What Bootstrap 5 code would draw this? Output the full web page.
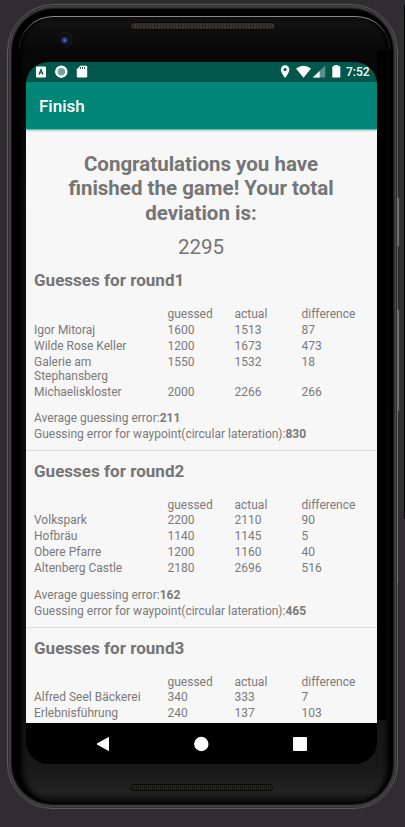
<!DOCTYPE html>
<html lang="en">
<head>
<meta charset="utf-8">
<meta name="viewport" content="width=device-width, initial-scale=1">
<title>Finish</title>
<link href="https://cdn.jsdelivr.net/npm/bootstrap@5.3.0/dist/css/bootstrap.min.css" rel="stylesheet">
<style>
body{width:405px;height:827px;background:#302d30;font-family:Roboto,sans-serif;font-size:12px;line-height:14px;color:#7a7a7a}
.desk{width:405px;height:827px;padding:4px 0 0 7px}
.desk-edge{right:0;top:5px;width:1px;height:514px;background:#000}
.phone{width:391px;height:805px;border:1px solid #5c5c5c;border-radius:47px 47px 45px 45px;background:#000;box-shadow:inset 0 0 0 1px #2c2c2c,inset 0 0 0 2px #484848,inset 0 0 0 3px #333,inset 0 0 0 4px #1c1c1c;padding:11px 7px 5px 11px}
.glass{width:371px;height:787px;border-radius:34px 34px 36px 36px;background:linear-gradient(#141414 0,#070707 34px,#080808 50px,#111 180px,#151515 700px,#181818 750px,#222 775px,#0b0b0b 787px);border-top:1px solid #8a8a8a;box-shadow:inset 5px 0 5px -2px #000,inset -5px 0 5px -2px #000}
.glass-side{right:16px;top:50px;width:12px;height:670px;background:linear-gradient(90deg,#000 75%,#080808)}
.rocker{right:5px;width:3px;background:#6b676b;border:1px solid #3a373a;border-left-color:#777377;border-radius:1px}
.rocker-a{top:197px;height:50px}.rocker-b{top:309px;height:103px}
.rim-light{left:397px;top:412px;width:1px;height:171px;background:#737073}
.lens{left:58px;top:32px;width:15px;height:15px;border-radius:50%;background:radial-gradient(circle at 45% 55%,#7184d8 0,#29376f 16%,#0b0e1d 38%,#08080a 50%,#1b1b1c 57%,#131313 72%)}
.grille{left:130px;width:146px;height:8px;border-radius:4px;border:1px solid #080808;background:repeating-linear-gradient(90deg,#37332f 0 2px,#24221f 2px 3px)}
.grille-top{top:22px}.grille-bottom{top:784px;width:143px;height:7px;background:repeating-linear-gradient(90deg,#292720 0 1px,#14130f 1px 2px)}
.screen{left:26px;top:62px;width:351px;height:702px;border-radius:22px;background:#000}
.status{height:20px;background:#00574b;color:#fff;padding:0 7px 0 9px}
.clock{font-size:12px;font-weight:500;width:24px;white-space:nowrap}
.appbar{height:47px;background:#008577;color:#fff;font-size:17px;font-weight:500;padding:0 13px 0;box-shadow:0 1px 2px rgba(0,0,0,.5);z-index:1}
.content-pane{height:594px;background:#f7f7f7}
.headline{font-size:20.5px;line-height:24.25px;font-weight:700;color:#757575;margin:23px 20px 0 19px}
.score{font-size:20.5px;line-height:25px;margin-top:10px;height:25px;padding-right:1px;color:#757575}
.round{padding:8px 8px 8px;border-bottom:1px solid #dcdcdc}
.round h2{font-size:17.05px;line-height:24px;font-weight:700;color:#757575;margin:0 0 14px}
.grid-row{display:grid;grid-template-columns:133.500px 67px 67px 67px;padding:1px 0}
.grid-row:nth-of-type(n+2){padding:.8px 0 1.200px}
.totals{margin-top:10px;line-height:16px}
.navkeys{height:41px;padding:0 70px}
</style>
</head>
<body>
<div class="desk position-relative overflow-hidden">
<div class="desk-edge position-absolute"></div>
<div class="rocker rocker-a position-absolute"></div><div class="rocker rocker-b position-absolute"></div>
<div class="phone"><div class="glass"></div></div>
<div class="rim-light position-absolute"></div>
<div class="glass-side position-absolute"></div>
<div class="lens position-absolute"></div>
<div class="grille grille-top position-absolute"></div>
<div class="grille grille-bottom position-absolute"></div>
<main class="screen position-absolute overflow-hidden d-flex flex-column">
<div class="status d-flex align-items-center justify-content-between flex-shrink-0">
<svg width="56" height="20" viewBox="0 0 56 20"><rect x="1" y="4.500" width="10" height="11" rx="1" fill="#fff"/><path d="M4 12.500 6 7.500l2 5M4.800 11h2.400" fill="none" stroke="#00574b" stroke-width="1.200"/><circle cx="26.300" cy="9.700" r="5" fill="#6fa59c" stroke="#fff" stroke-width="2.500"/><path d="M45.300 3.700h5.900q1 0 1 1v9.800q0 1-1 1h-8.400q-1 0-1-1V7.200z" fill="#fff"/><path d="M45.500 5v1.700m2-1.700v1.700m2-1.700v1.700" stroke="#00574b"/></svg>
<div class="d-flex align-items-center"><svg width="65" height="20" viewBox="0.7 0 65 20"><path fill="#fff" fill-rule="evenodd" d="M8.800 3.200a4.300 4.300 0 0 0-4.300 4.300c0 3.200 4.300 8.500 4.300 8.500s4.300-5.300 4.300-8.500a4.300 4.300 0 0 0-4.300-4.300zm0 2.700a1.600 1.600 0 1 1 0 3.200 1.600 1.600 0 0 1 0-3.200z"/><path d="M19.700 6.500Q27.200 .8 34.700 6.500L27.200 15.700z" fill="#fff"/><path d="M49 3.500v12H36.500z" fill="#5b918a"/><path d="M43.300 9v6.500h-6.800z" fill="#fff"/><path d="M58 4.200V3h4v1.200h2v11.300h-8V4.200z" fill="#fff"/></svg><span class="clock ms-1">7:52</span></div>
</div>
<header class="appbar d-flex align-items-center flex-shrink-0 position-relative">Finish</header>
<div class="content-pane overflow-hidden flex-shrink-0">
<h1 class="headline text-center">Congratulations you have<br>finished the game! Your total<br>deviation is:</h1>
<div class="score text-center">2295</div>
<section class="round"><h2>Guesses for round1</h2>
<div class="grid-row"><span></span><span>guessed</span><span>actual</span><span>difference</span></div>
<div class="grid-row"><span>Igor Mitoraj</span><span>1600</span><span>1513</span><span>87</span></div>
<div class="grid-row"><span>Wilde Rose Keller</span><span>1200</span><span>1673</span><span>473</span></div>
<div class="grid-row"><span>Galerie am<br>Stephansberg</span><span>1550</span><span>1532</span><span>18</span></div>
<div class="grid-row"><span>Michaeliskloster</span><span>2000</span><span>2266</span><span>266</span></div>
<div class="totals"><div>Average guessing error:<b>211</b></div><div>Guessing error for waypoint(circular lateration):<b>830</b></div></div></section>
<section class="round"><h2>Guesses for round2</h2>
<div class="grid-row"><span></span><span>guessed</span><span>actual</span><span>difference</span></div>
<div class="grid-row"><span>Volkspark</span><span>2200</span><span>2110</span><span>90</span></div>
<div class="grid-row"><span>Hofbräu</span><span>1140</span><span>1145</span><span>5</span></div>
<div class="grid-row"><span>Obere Pfarre</span><span>1200</span><span>1160</span><span>40</span></div>
<div class="grid-row"><span>Altenberg Castle</span><span>2180</span><span>2696</span><span>516</span></div>
<div class="totals"><div>Average guessing error:<b>162</b></div><div>Guessing error for waypoint(circular lateration):<b>465</b></div></div></section>
<section class="round"><h2>Guesses for round3</h2>
<div class="grid-row"><span></span><span>guessed</span><span>actual</span><span>difference</span></div>
<div class="grid-row"><span>Alfred Seel Bäckerei</span><span>340</span><span>333</span><span>7</span></div>
<div class="grid-row"><span>Erlebnisführung</span><span>240</span><span>137</span><span>103</span></div></section>
</div>
<nav class="navkeys d-flex align-items-center justify-content-between">
<svg width="14" height="16" viewBox="0 0 14 16"><path d="M1 8 12.500 1.500v13z" fill="#fff" stroke="#fff" stroke-linejoin="round"/></svg>
<svg width="16" height="16" viewBox="0.7 0 16 16"><circle cx="8" cy="8" r="7.200" fill="#fff"/></svg>
<svg width="14" height="16" viewBox="0 0 14 16"><rect y="1" width="14" height="14" rx="1" fill="#fff"/></svg>
</nav>
</main>
</div>
<script src="https://cdn.jsdelivr.net/npm/bootstrap@5.3.0/dist/js/bootstrap.bundle.min.js"></script>
</body>
</html>
